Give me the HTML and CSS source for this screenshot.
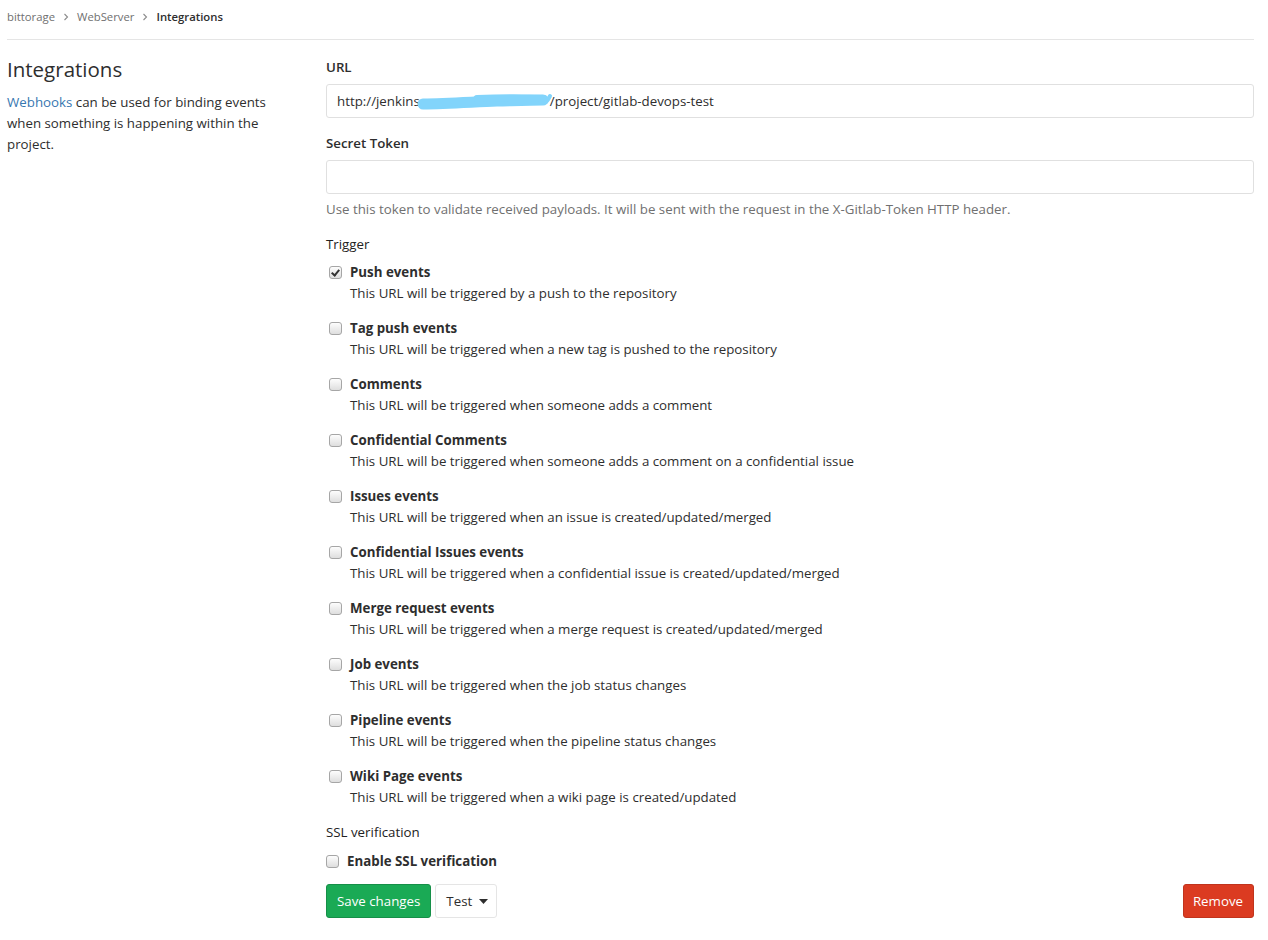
FILE: index.html
```html
<!DOCTYPE html>
<html>
<head>
<meta charset="utf-8">
<link rel="stylesheet" href="styles.css">
</head>
<body>
<div class="page">
  <nav class="breadcrumb">
    <span class="crumb">bittorage</span>
    <svg class="chev" width="6" height="8" viewBox="0 0 6 8"><path d="M1.5 1l3 3-3 3" fill="none" stroke="#8c8c8c" stroke-width="1.1"/></svg>
    <span class="crumb">WebServer</span>
    <svg class="chev" width="6" height="8" viewBox="0 0 6 8"><path d="M1.5 1l3 3-3 3" fill="none" stroke="#8c8c8c" stroke-width="1.1"/></svg>
    <span class="crumb current">Integrations</span>
  </nav>
  <div class="layout">
    <aside class="side">
      <h4 class="side-title">Integrations</h4>
      <p class="side-text"><a class="link">Webhooks</a> can be used for binding events when something is happening within the project.</p>
    </aside>
    <form class="form">
      <label class="label">URL</label>
      <div class="input url-input">http://jenkins<svg class="scribble" width="136" height="18" viewBox="0 0 136 18"><path d="M6 12 C30 11.5 55 10 80 9 C100 8.5 115 8 126 8" fill="none" stroke="#82d4fb" stroke-width="11" stroke-linecap="round"/><path d="M60 6.5 C85 5.5 110 5.5 127 6.5" fill="none" stroke="#82d4fb" stroke-width="7" stroke-linecap="round"/><path d="M129 10 C131 8 132 6 133 4" fill="none" stroke="#82d4fb" stroke-width="4" stroke-linecap="round"/></svg>/project/gitlab-devops-test</div>
      <label class="label second">Secret Token</label>
      <div class="input"></div>
      <p class="help">Use this token to validate received payloads. It will be sent with the request in the X-Gitlab-Token HTTP header.</p>
      <label class="label plain trig">Trigger</label>
      <div class="triggers">
        <div class="check-row">
          <span class="box checked"></span>
          <div class="check-text"><div class="check-title">Push events</div><div class="check-desc">This URL will be triggered by a push to the repository</div></div>
        </div>
        <div class="check-row">
          <span class="box"></span>
          <div class="check-text"><div class="check-title">Tag push events</div><div class="check-desc">This URL will be triggered when a new tag is pushed to the repository</div></div>
        </div>
        <div class="check-row">
          <span class="box"></span>
          <div class="check-text"><div class="check-title">Comments</div><div class="check-desc">This URL will be triggered when someone adds a comment</div></div>
        </div>
        <div class="check-row">
          <span class="box"></span>
          <div class="check-text"><div class="check-title">Confidential Comments</div><div class="check-desc">This URL will be triggered when someone adds a comment on a confidential issue</div></div>
        </div>
        <div class="check-row">
          <span class="box"></span>
          <div class="check-text"><div class="check-title">Issues events</div><div class="check-desc">This URL will be triggered when an issue is created/updated/merged</div></div>
        </div>
        <div class="check-row">
          <span class="box"></span>
          <div class="check-text"><div class="check-title">Confidential Issues events</div><div class="check-desc">This URL will be triggered when a confidential issue is created/updated/merged</div></div>
        </div>
        <div class="check-row">
          <span class="box"></span>
          <div class="check-text"><div class="check-title">Merge request events</div><div class="check-desc">This URL will be triggered when a merge request is created/updated/merged</div></div>
        </div>
        <div class="check-row">
          <span class="box"></span>
          <div class="check-text"><div class="check-title">Job events</div><div class="check-desc">This URL will be triggered when the job status changes</div></div>
        </div>
        <div class="check-row">
          <span class="box"></span>
          <div class="check-text"><div class="check-title">Pipeline events</div><div class="check-desc">This URL will be triggered when the pipeline status changes</div></div>
        </div>
        <div class="check-row">
          <span class="box"></span>
          <div class="check-text"><div class="check-title">Wiki Page events</div><div class="check-desc">This URL will be triggered when a wiki page is created/updated</div></div>
        </div>
      </div>
      <label class="label plain ssl">SSL verification</label>
      <div class="ssl-row">
        <span class="box"></span>
        <span class="check-title">Enable SSL verification</span>
      </div>
      <div class="actions">
        <button type="button" class="btn btn-save">Save changes</button>
        <button type="button" class="btn btn-test">Test <svg width="9" height="5" viewBox="0 0 9 5"><path d="M0 0h9L4.5 5z" fill="#2e2e2e"/></svg></button>
        <span class="spacer"></span>
        <button type="button" class="btn btn-remove">Remove</button>
      </div>
    </form>
  </div>
</div>
</body>
</html>
```
FILE: styles.css
```css
* { box-sizing: border-box; }
html, body { margin: 0; padding: 0; background: #fff; }
body {
  font-family: "Open Sans", "Noto Sans", sans-serif;
  font-size: 13.3px;
  color: #2e2e2e;
}
.page { padding: 0 14px 0 7px; }
.breadcrumb {
  height: 40px;
  border-bottom: 1px solid #e5e5e5;
  display: flex;
  align-items: center;
  gap: 8px;
  font-size: 11.3px;
  color: #707070;
  padding-bottom: 6px;
}
.crumb.current { color: #2e2e2e; font-weight: 600; }
.chev { display: block; }
.layout {
  display: grid;
  grid-template-columns: 319px 1fr;
  padding-top: 17px;
}
.side-title {
  margin: -1px 0 10px;
  font-size: 20.5px;
  font-weight: 400;
  line-height: 26px;
}
.side-text {
  margin: 0;
  width: 282px;
  font-size: 13.3px;
  line-height: 21px;
}
.link { color: #3777b0; text-decoration: none; }
.form { display: flex; flex-direction: column; }
.label {
  display: block;
  font-weight: 600;
  font-size: 13.3px;
  line-height: 20px;
  margin-bottom: 7px;
}
.label.second { margin-top: 15px; }
.label.plain { font-weight: 400; color: #222; }
.input {
  height: 34px;
  border: 1px solid #e0e0e0;
  border-radius: 3px;
  padding: 0 10px;
  display: flex;
  align-items: center;
  font-size: 13.3px;
  color: #2e2e2e;
}
.scribble { display: block; margin: 0 -3px 0 -3px; }
.help {
  margin: 5px 0 0;
  font-size: 13.3px;
  color: #707070;
  line-height: 20px;
}
.trig { margin-top: 15px; margin-bottom: 8px; }
.triggers { display: flex; flex-direction: column; gap: 14px; }
.check-row { display: flex; align-items: flex-start; }
.box {
  flex: none;
  width: 13px;
  height: 13px;
  margin: 4px 8px 0 3px;
  border: 1px solid #a6a6a6;
  border-radius: 3px;
  background: linear-gradient(#fdfdfd, #dedede);
  position: relative;
}
.box.checked::after {
  content: "";
  position: absolute;
  left: 3px;
  top: 1px;
  width: 3px;
  height: 6px;
  border: solid #333;
  border-width: 0 2px 2px 0;
  transform: rotate(40deg);
}
.check-title { font-weight: 700; font-size: 13.3px; line-height: 20px; }
.check-desc { font-size: 13.3px; line-height: 22px; }
.ssl { margin-top: 14px; margin-bottom: 9px; }
.ssl-row { display: flex; align-items: center; }
.ssl-row .box { margin: 0 8px 0 0; }
.actions { display: flex; align-items: center; gap: 4px; margin-top: 13px; }
.spacer { flex: 1; }
.btn {
  height: 34px;
  border-radius: 3px;
  font-family: inherit;
  font-size: 13.3px;
  padding: 0 10px;
  border: 1px solid transparent;
  display: inline-flex;
  align-items: center;
  gap: 8px;
}
.btn-save { background: #1aaa55; border-color: #168f48; color: #fff; }
.btn-test { background: #fff; border-color: #e5e5e5; color: #2e2e2e; padding: 0 8px 0 10px; gap: 7px; }
.btn-remove { background: #db3b21; border-color: #c0341d; color: #fff; padding: 0 10px 0 9px; }
```
